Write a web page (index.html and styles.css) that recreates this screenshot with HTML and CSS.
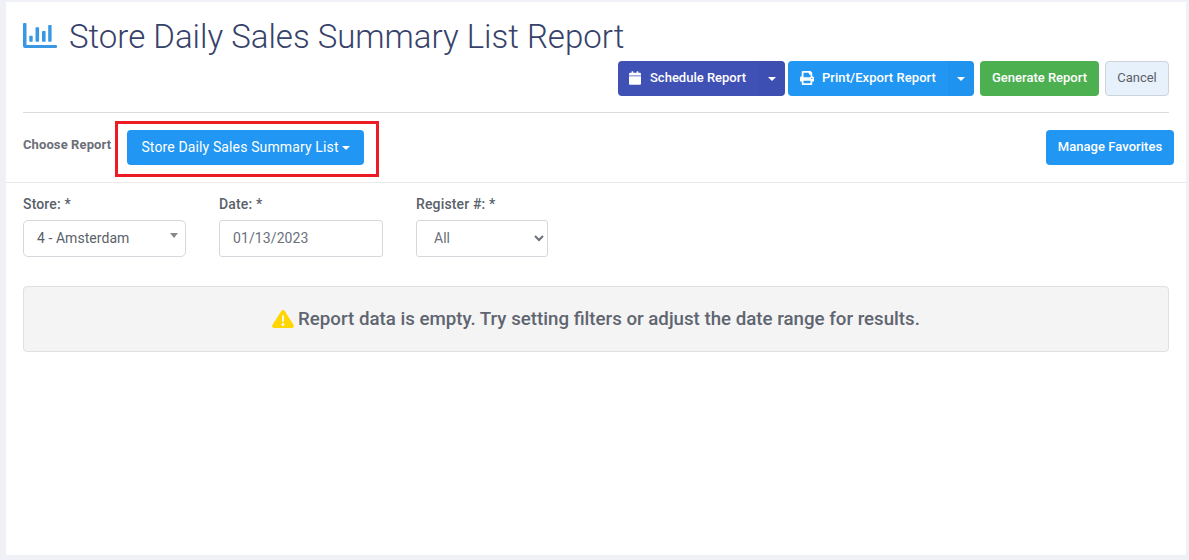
FILE: index.html
```html
<!DOCTYPE html>
<html lang="en">
<head>
<meta charset="utf-8">
<title>Store Daily Sales Summary List Report</title>
<link rel="stylesheet" href="styles.css">
</head>
<body>
<main class="card">
  <header class="head">
    <h1 class="title">
      <svg class="title-icon" viewBox="0 0 34 25" width="34" height="25"><path fill="#3a97e4" d="M0 1a1 1 0 0 1 1-1h1.500a1 1 0 0 1 1 1v21h29.500a1 1 0 0 1 1 1v1a1 1 0 0 1-1 1H2a2 2 0 0 1-2-2z"/><rect fill="#3a97e4" x="6.300" y="12.700" width="3.400" height="6" rx=".7"/><rect fill="#3a97e4" x="12.500" y="4.300" width="3.600" height="14.400" rx=".7"/><rect fill="#3a97e4" x="19" y="8" width="3.600" height="10.700" rx=".7"/><rect fill="#3a97e4" x="25.200" y="2" width="3.400" height="16.700" rx=".7"/></svg>
      <span>Store Daily Sales Summary List Report</span>
    </h1>
    <div class="actions">
      <div class="split split-indigo">
        <button class="btn main-part" type="button">
          <svg class="btn-icon" viewBox="0 0 448 512" width="12" height="14"><path fill="#fff" d="M0 464c0 26.500 21.500 48 48 48h352c26.500 0 48-21.500 48-48V192H0v272zM400 64h-48V16c0-8.800-7.200-16-16-16h-32c-8.800 0-16 7.200-16 16v48H160V16c0-8.800-7.200-16-16-16h-32c-8.800 0-16 7.200-16 16v48H48C21.500 64 0 85.500 0 112v48h448v-48c0-26.500-21.500-48-48-48z"/></svg>
          <span>Schedule Report</span>
        </button>
        <button class="btn caret-part" type="button" aria-label="More"><span class="caret"></span></button>
      </div>
      <div class="split split-blue">
        <button class="btn main-part" type="button">
          <svg class="btn-icon" viewBox="0 0 512 512" width="14" height="14"><path fill="#fff" d="M448 192V77.250c0-8.490-3.370-16.620-9.370-22.630L393.370 9.370c-6-6-14.140-9.370-22.630-9.370H96C78.330 0 64 14.330 64 32v160c-35.350 0-64 28.650-64 64v112c0 8.840 7.160 16 16 16h48v96c0 17.670 14.330 32 32 32h320c17.670 0 32-14.330 32-32v-96h48c8.840 0 16-7.160 16-16V256c0-35.350-28.650-64-64-64zm-64 256H128v-96h256v96zm0-224H128V64h192v48c0 8.840 7.160 16 16 16h48v96zm48 72c-13.250 0-24-10.750-24-24 0-13.260 10.750-24 24-24s24 10.740 24 24c0 13.250-10.750 24-24 24z"/></svg>
          <span>Print/Export Report</span>
        </button>
        <button class="btn caret-part" type="button" aria-label="More"><span class="caret"></span></button>
      </div>
      <button class="btn btn-green" type="button">Generate Report</button>
      <button class="btn btn-cancel" type="button">Cancel</button>
    </div>
  </header>

  <section class="chooser">
    <span class="choose-label">Choose Report</span>
    <div class="highlight">
      <button class="btn btn-report" type="button">Store Daily Sales Summary List<span class="caret caret-inline"></span></button>
    </div>
    <button class="btn btn-favorites" type="button">Manage Favorites</button>
  </section>

  <section class="content">
    <form class="filters">
      <div class="field field-store">
        <label class="field-label">Store: *</label>
        <div class="fake-select">4 - Amsterdam<span class="fake-arrow"></span></div>
      </div>
      <div class="field field-date">
        <label class="field-label">Date: *</label>
        <input class="control date-input" type="text" value="01/13/2023">
      </div>
      <div class="field field-register">
        <label class="field-label">Register #: *</label>
        <select class="control register-select"><option>All</option></select>
      </div>
    </form>
    <div class="empty">
      <svg class="warn" viewBox="0 0 22 18" width="22" height="18"><path fill="#ffd600" d="M9.300 1a2 2 0 0 1 3.400 0l8.900 14a2 2 0 0 1-1.700 3H2.100a2 2 0 0 1-1.700-3z"/><path fill="#f4f4f4" d="M9.900 5.500h2.200l-.3 6.500h-1.600zM11 13a1.500 1.500 0 1 1 0 3 1.500 1.500 0 0 1 0-3z"/></svg>
      <span>Report data is empty. Try setting filters or adjust the date range for results.</span>
    </div>
  </section>
</main>
</body>
</html>
```

FILE: styles.css
```css
* { box-sizing: border-box; }
html, body { height: 100%; }
body {
  margin: 0;
  padding: 2px 3px 5px 6px;
  background: #f0f0f7;
  font-family: Roboto, "Liberation Sans", sans-serif;
  color: #5a5f69;
}
.card { height: 553px; background: #fff; }
.head { margin: 0 17px; height: 111px; border-bottom: 1px solid #dcdcdc; }
.title {
  margin: 0;
  padding-top: 16px;
  height: 59px;
  display: flex;
  align-items: flex-start;
  gap: 12px;
  font-weight: 300;
  font-size: 33px;
  line-height: 38px;
  color: #36426a;
}
.title-icon { margin-top: 5px; flex: none; }
.actions { display: flex; justify-content: flex-end; align-items: flex-start; }
.btn {
  height: 35px;
  border: 0;
  border-radius: 4px;
  font-family: inherit;
  font-size: 13px;
  font-weight: 500;
  color: #fff;
  padding: 0 0 2px;
  white-space: nowrap;
}
.split { display: flex; height: 35px; border-radius: 4px; overflow: hidden; }
.split .btn { border-radius: 0; background: transparent; }
.split-indigo { background: #3f51b5; margin-right: 3px; width: 167px; }
.split-blue { background: #2196f3; margin-right: 6px; width: 186px; }
.main-part { display: flex; align-items: center; }
.split-indigo .main-part { padding-left: 11px; width: 140px; gap: 9px; }
.split-blue .main-part { padding-left: 12px; width: 160px; gap: 8px; letter-spacing: .05px; }
.split .caret-part {
  flex: 1;
  display: flex;
  align-items: center;
  justify-content: center;
  padding: 1px 0 0;
  background: rgba(0, 0, 0, .02);
}
.btn-icon { flex: none; }
.caret {
  display: inline-block;
  width: 0; height: 0;
  border-left: 4px solid transparent;
  border-right: 4px solid transparent;
  border-top: 4px solid #fff;
}
.caret-inline { margin-left: 3px; vertical-align: 2px; }
.btn-green { background: #4caf50; width: 119px; margin-right: 6px; }
.btn-cancel {
  width: 64px;
  background: #e7f1fb;
  border: 1px solid #ccd3db;
  color: #5a5f69;
  font-weight: 400;
}
.chooser {
  height: 70px;
  padding: 8px 12px 0 17px;
  display: flex;
  align-items: flex-start;
  border-bottom: 1px solid #eaeaea;
}
.choose-label { margin-top: 16px; font-size: 13px; letter-spacing: .1px; line-height: 15px; font-weight: 700; color: #6b6f77; width: 92px; flex: none; white-space: nowrap; }
.highlight { border: 3px solid #ed1c24; padding: 6px 12px 9px 9px; height: 56px; width: 264px; flex: none; }
.btn-report { width: 237px; background: #2196f3; font-size: 14px; font-weight: 400; letter-spacing: .13px; }
.btn-favorites { margin-left: auto; margin-top: 9px; width: 128px; background: #2196f3; letter-spacing: .05px; }
.content { padding: 0 17px; }
.filters { display: flex; padding-top: 13px; }
.field { display: flex; flex-direction: column; }
.field-store { width: 163px; margin-right: 33px; }
.field-date { width: 164px; margin-right: 33px; }
.field-register { width: 132px; }
.field-label { font-size: 14px; line-height: 17px; font-weight: 500; letter-spacing: .15px; color: #5a5f69; margin-bottom: 7px; }
.control, .fake-select {
  height: 37px;
  width: 100%;
  border: 1px solid #d5d8dd;
  border-radius: 3px;
  background: #fff;
  font-family: inherit;
  font-size: 14px;
  color: #5a5f69;
}
.fake-select {
  display: flex;
  align-items: center;
  justify-content: space-between;
  padding: 0 7px 2px 13px;
  border-radius: 5px;
  letter-spacing: .05px;
}
.fake-arrow {
  width: 0; height: 0;
  margin-top: -4px;
  border-left: 4px solid transparent;
  border-right: 4px solid transparent;
  border-top: 5px solid #888;
}
.date-input { padding: 0 0 2px 13px; color: #6b7079; outline: none; letter-spacing: .1px; }
.register-select { padding: 0 0 2px 13px; color: #6b7079; }
.empty {
  margin-top: 29px;
  height: 66px;
  width: 1146px;
  background: #f4f4f4;
  border: 1px solid #e0e0e0;
  border-radius: 4px;
  display: flex;
  align-items: center;
  justify-content: center;
  gap: 4px;
  padding-bottom: 1px;
  font-size: 18.7px;
  font-weight: 500;
  color: #5f6570;
}
.warn { flex: none; }
```
